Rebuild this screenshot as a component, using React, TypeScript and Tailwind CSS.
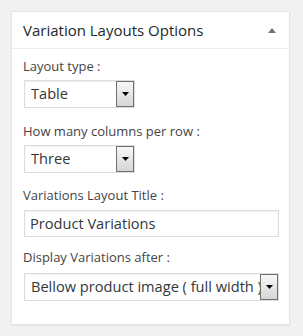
import React from "react";

function Arrow() {
  return (
    <div className="w-[18px] h-full shrink-0 border border-[#707070] bg-gradient-to-b from-[#f7f7f7] to-[#d6d6d6] flex items-center justify-center">
      <svg width="7" height="4" viewBox="0 0 7 4">
        <path d="M0 0 H7 L3.5 4 Z" fill="#000" />
      </svg>
    </div>
  );
}

function FakeSelect({ value, className }: { value: string; className: string }) {
  return (
    <div className={`h-[28px] border border-[#dddddd] bg-white flex items-stretch shadow-[inset_0_1px_2px_rgba(0,0,0,0.07)] ${className}`}>
      <div className="flex-1 min-w-0 overflow-hidden whitespace-nowrap pl-[6px] flex items-center text-[14.6px] text-[#32373c]">
        {value}
      </div>
      <Arrow />
    </div>
  );
}

export default function App() {
  return (
    <div className="min-h-[336px] w-[303px] bg-[#f1f1f1] pt-[11px] pl-[11px] font-['Open_Sans',sans-serif]">
      <div className="w-[279px] bg-white border border-[#e5e5e5] shadow-[0_1px_1px_rgba(0,0,0,0.04)]">
        <div className="h-[37px] border-b border-[#eeeeee] flex items-center justify-between pl-[11px] pr-[13px]">
          <span className="text-[15px] text-[#23282d] leading-[18px]">Variation Layouts Options</span>
          <svg width="8" height="5" viewBox="0 0 8 5">
            <path d="M0 5 L4 0 L8 5 Z" fill="#72777c" />
          </svg>
        </div>
        <div className="pl-[12px] pr-[10px] pt-[8px] pb-[23px]">
          <div className="text-[13px] leading-[18px] text-[#444444] -ml-px mb-[5px]">Layout type :</div>
          <FakeSelect value="Table" className="w-[111px]" />
          <div className="text-[13px] leading-[18px] text-[#444444] -ml-px mt-[14px] mb-[5px]">How many columns per row :</div>
          <FakeSelect value="Three" className="w-[111px]" />
          <div className="text-[13px] leading-[18px] text-[#444444] -ml-px mt-[13px] mb-[6px]">Variations Layout Title :</div>
          <div className="h-[27px] w-[255px] border border-[#dddddd] bg-white shadow-[inset_0_1px_2px_rgba(0,0,0,0.07)] flex items-center pl-[5px] text-[14.6px] text-[#32373c]">
            Product Variations
          </div>
          <div className="text-[13px] leading-[18px] text-[#444444] -ml-px mt-[11px] mb-[7px]">Display Variations after :</div>
          <FakeSelect value="Bellow product image ( full width )" className="w-[255px]" />
        </div>
      </div>
    </div>
  );
}
